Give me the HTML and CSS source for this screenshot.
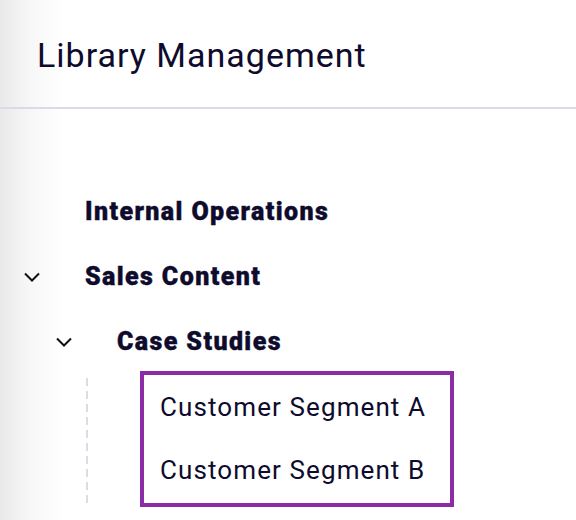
FILE: index.html
```html
<!DOCTYPE html>
<html>
<head>
<meta charset="utf-8">
<link rel="stylesheet" href="styles.css">
</head>
<body>
<div class="page">
  <header class="header"><h1 class="title">Library Management</h1></header>
  <nav class="tree">
    <div class="row lvl1"><span class="chev-space"></span><span class="label bold">Internal Operations</span></div>
    <div class="row lvl1"><span class="chev-space"><svg class="chev" viewBox="0 0 16 10" width="16" height="10"><path d="M1 1.5 L8 8.5 L15 1.5" fill="none" stroke="#111" stroke-width="2"/></svg></span><span class="label bold">Sales Content</span></div>
    <div class="row lvl2"><span class="chev-space"><svg class="chev" viewBox="0 0 16 10" width="16" height="10"><path d="M1 1.5 L8 8.5 L15 1.5" fill="none" stroke="#111" stroke-width="2"/></svg></span><span class="label bold">Case Studies</span></div>
    <div class="children">
      <div class="guide"></div>
      <div class="selbox">
        <div class="leaf">Customer Segment A</div>
        <div class="leaf">Customer Segment B</div>
      </div>
    </div>
  </nav>
</div>
</body>
</html>
```
FILE: styles.css
```css
html, body { margin: 0; padding: 0; }
body {
  width: 576px; height: 520px; overflow: hidden;
  background: linear-gradient(to right, #e9e9e9 0px, #f7f7f7 30px, #ffffff 62px);
  font-family: Roboto, "Noto Sans", sans-serif;
  color: #0e0b2d;
}
.header {
  height: 107px;
  border-bottom: 2px solid #dcdae5;
  box-sizing: content-box;
  display: flex; align-items: flex-start;
  padding-left: 37px;
}
.title {
  margin: 0; padding-top: 35px;
  font-size: 34px; font-weight: 400; line-height: 40px;
  letter-spacing: 1px;
}
.tree { padding-top: 70px; }
.row { height: 65px; display: flex; align-items: center; }
.lvl1 { padding-left: 24px; }
.lvl2 { padding-left: 56px; }
.chev-space { width: 61px; display: flex; align-items: center; }
.chev { display: block; }
.label.bold { font-size: 25px; font-weight: 900; letter-spacing: 1.4px; -webkit-text-stroke: 0.4px #0e0b2d; }
.children { display: flex; margin-top: -3px; }
.guide {
  width: 2px; margin-left: 86px; margin-top: 7px; height: 127px;
  background: repeating-linear-gradient(to bottom, #dcdce6 0 8px, transparent 8px 13px);
}
.selbox {
  margin-left: 52px; width: 306px;
  border: 4px solid #8a2ca6;
  padding-bottom: 2px;
}
.leaf { height: 63px; display: flex; align-items: center; padding-left: 16px; font-size: 26px; letter-spacing: 1.1px; }
```
